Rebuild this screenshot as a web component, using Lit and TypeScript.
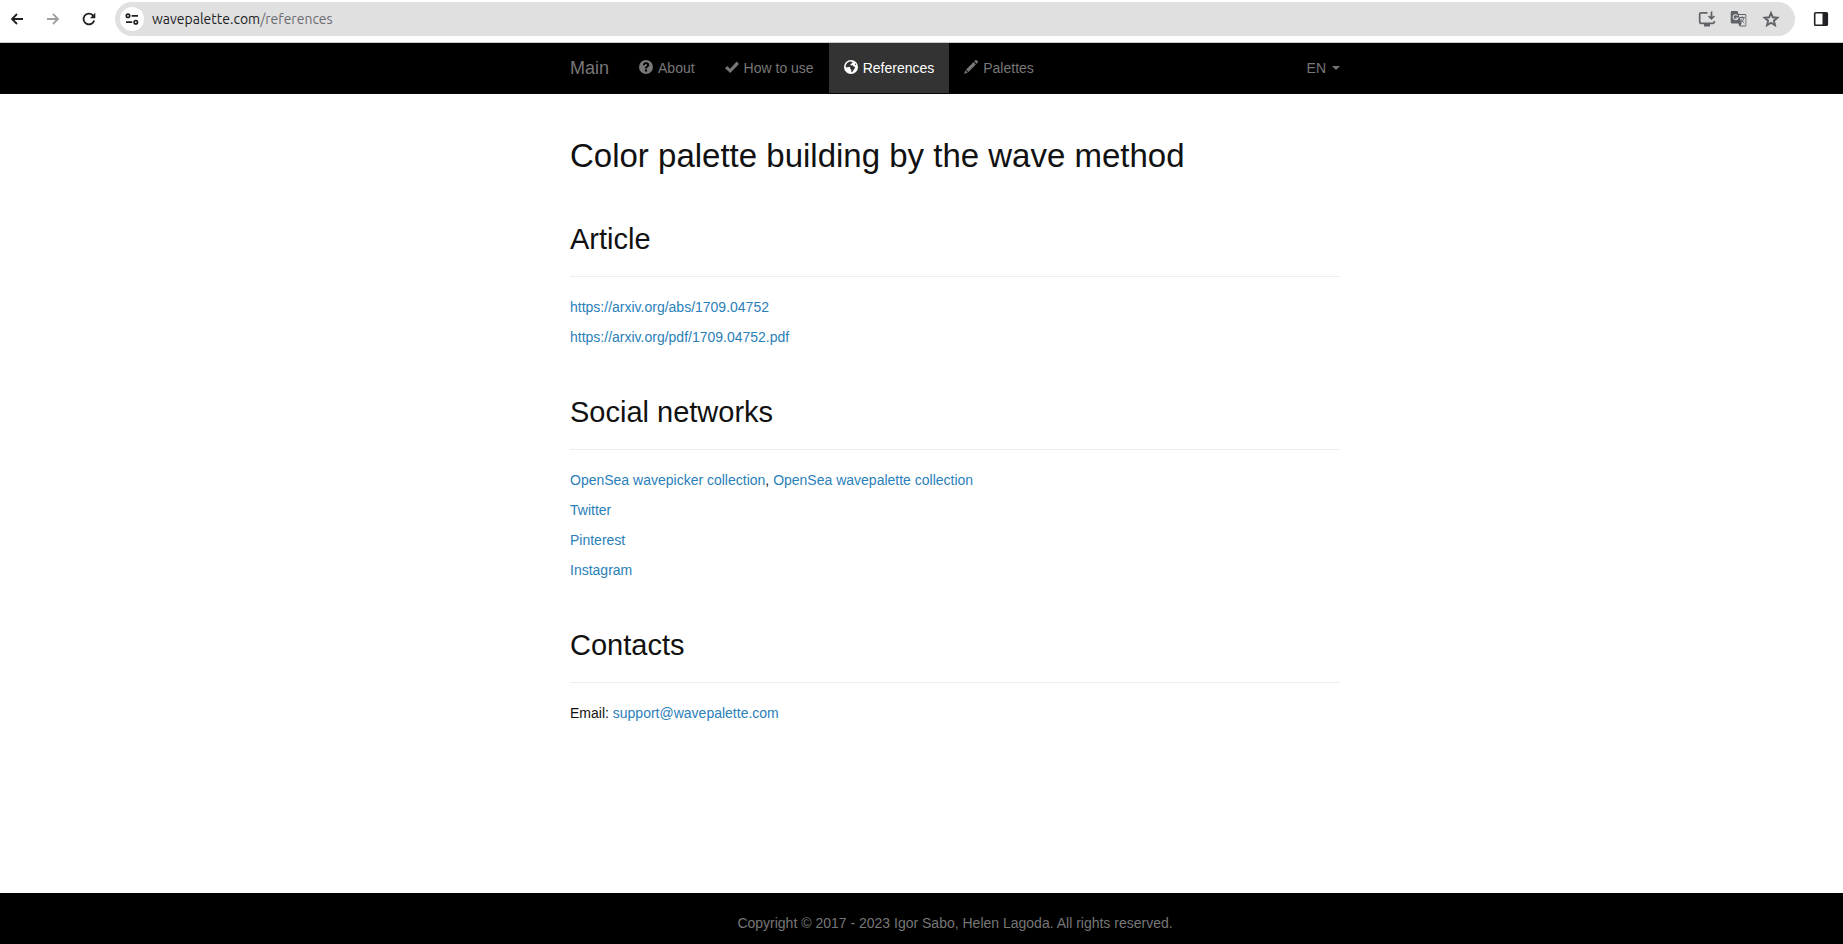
import { LitElement, html, css, svg } from "lit";
import { customElement } from "lit/decorators.js";

const glyph = (box: string, body: unknown, cls = "glyph") =>
  html`<svg class=${cls} viewBox=${box} aria-hidden="true">${body}</svg>`;

const icons = {
  back: svg`<path d="M14 8H3M8 3L3 8l5 5" fill="none" stroke="currentColor" stroke-width="1.8"/>`,
  forward: svg`<path d="M2 8h11M8 3l5 5-5 5" fill="none" stroke="currentColor" stroke-width="1.8"/>`,
  reload: svg`<path d="M13.2 9.4A5.4 5.4 0 1 1 11.9 4.3L13.4 6" fill="none" stroke="currentColor" stroke-width="1.8"/><path d="M14.3 1.8v5.4H9z" fill="currentColor"/>`,
  tune: svg`<g fill="none" stroke="currentColor" stroke-width="1.7"><circle cx="4" cy="4.8" r="1.7"/><path d="M7.6 4.8H14M2 11.2h6.2"/><circle cx="11.8" cy="11.2" r="1.7"/></g>`,
  install: svg`<path d="M9.5 2.8H3A1.3 1.3 0 0 0 1.7 4.1v8A1.3 1.3 0 0 0 3 13.4h12a1.3 1.3 0 0 0 1.3-1.3V11" fill="none" stroke="currentColor" stroke-width="1.7"/><path d="M6 14h6v2.5H6z" fill="currentColor"/><path d="M13.5 1.5v7M10.6 6l2.9 2.9L16.4 6" fill="none" stroke="currentColor" stroke-width="1.7"/>`,
  translate: svg`<path d="M2 1h5.500l1 3H15a1.300 1.300 0 0 1 1.300 1.300v10A1.300 1.300 0 0 1 15 16.600H9.500L8.300 13.500H2A1.300 1.300 0 0 1 .7 12.200v-10A1.300 1.300 0 0 1 2 1z" fill="currentColor"/><path d="M8.800 5H15a.5.5 0 0 1 .5.5v9.600a.5.500 0 0 1-.5.500h-4.600l1.200-2.200z" fill="#e0e0e0"/><path d="M7.700 5.800A2.500 2.500 0 1 0 8 8H5.500" fill="none" stroke="#e0e0e0" stroke-width="1.100"/><path d="M9.800 7.500h5M12.200 6.300v1.200M14 7.700c-.4 2-1.800 3.700-3.500 4.700M10.800 8.500c.6 1.700 1.800 3.200 3.500 4.500" fill="none" stroke="currentColor" stroke-width="1"/>`,
  star: svg`<path d="M9 3l1.800 4.300 4.600.4-3.500 3 1.100 4.500L9 12.800l-4 2.400 1.100-4.500-3.500-3 4.600-.4z" fill="none" stroke="currentColor" stroke-width="1.9"/>`,
  panel: svg`<rect x="1.7" y="1.7" width="12.6" height="12.6" rx=".8" fill="none" stroke="currentColor" stroke-width="1.6"/><path d="M9.5 2H14v12H9.5z" fill="currentColor"/>`,
  question: svg`<path fill-rule="evenodd" fill="currentColor" d="M7 0a7 7 0 1 1 0 14A7 7 0 0 1 7 0zM5.900 9.500v2h2.200v-2zM3.900 5.300h2c0-.8.300-1.200 1.100-1.200.7 0 1 .3 1 .9 0 .5-.2.800-.8 1.200-.9.600-1.300 1.100-1.300 2.300h2c0-.6.300-.9.900-1.300.9-.6 1.400-1.200 1.400-2.300 0-1.600-1.200-2.600-3.100-2.600-2 0-3.200 1.100-3.200 3z"/>`,
  check: svg`<path fill="currentColor" d="M0 8.300L2.200 6l2.900 2.700L11.700 1.600 14 3.900 5.200 13z"/>`,
  globe: svg`<path fill-rule="evenodd" fill="currentColor" d="M7 0a7 7 0 1 1 0 14A7 7 0 0 1 7 0zM7.200 1.400L8.600 2.500 7.600 3.600 6.300 4.200 6.900 5.400 8.700 5.200 9.800 6.400 11.200 6.900 10.400 8.700 9.200 10.500 8.100 12.600 7.300 11.700 7.300 9.800 6.100 8.700 6.200 7.300 4.900 6.800 4.100 7.600 2.900 6.600 3.400 8.200 2.300 7.200 1.500 6.200 2.300 4.200 3.600 2.600 5.200 1.700zM10.900 3l1.400 1.700-1.200.2z"/>`,
  pencil: svg`<path fill="currentColor" d="M11.300.3a1 1 0 0 1 1.400 0l1 1a1 1 0 0 1 0 1.400l-1.100 1.100-2.400-2.400zM9.500 2.100l2.400 2.400-7.400 7.400L2.100 9.500zM1.500 10.200l2.300 2.300L0 14z"/>`,
};

const menu = [
  { label: "About", icon: icons.question, active: false },
  { label: "How to use", icon: icons.check, active: false },
  { label: "References", icon: icons.globe, active: true },
  { label: "Palettes", icon: icons.pencil, active: false },
];

@customElement("browser-bar")
class BrowserBar extends LitElement {
  static styles = css`
    :host { display: flex; align-items: center; height: 42px; padding: 0 14px 0 9px; box-sizing: border-box; background: #fff; color: #202124; }
    .tool { display: flex; padding: 0; border: 0; background: none; color: inherit; margin: 0 0 4px; }
    .nav { display: flex; gap: 20px; }
    .dim { color: #a0a0a0; }
    .glyph { display: block; width: 16px; height: 16px; }
    .big { display: block; width: 18px; height: 18px; }
    .address { display: flex; flex: 1; align-items: center; height: 34px; margin: 0 18px 4px; padding: 0 15px 0 5px; border-radius: 17px; background: #e0e0e0; box-sizing: border-box; }
    .address .tool { margin: 0; color: #5f6368; }
    .address .site { width: 24px; height: 24px; align-items: center; justify-content: center; border-radius: 12px; background: #fff; color: #202124; }
    .url { flex: 1; margin-left: 8px; font: 14px/20px Ubuntu, "Noto Sans", sans-serif; color: #6b6d70; }
    .host { color: #202124; }
    .actions { display: flex; gap: 14px; }
  `;
  render() {
    return html`
      <div class="nav">
        <button class="tool" aria-label="Back">${glyph("0 0 16 16", icons.back)}</button>
        <button class="tool dim" aria-label="Forward">${glyph("0 0 16 16", icons.forward)}</button>
        <button class="tool" aria-label="Reload">${glyph("0 0 16 16", icons.reload)}</button>
      </div>
      <div class="address">
        <button class="tool site" aria-label="Site information">${glyph("0 0 16 16", icons.tune)}</button>
        <div class="url"><span class="host">wavepalette.com</span>/references</div>
        <div class="actions">
          <button class="tool" aria-label="Install">${glyph("0 0 18 18", icons.install, "big")}</button>
          <button class="tool" aria-label="Translate">${glyph("0 0 18 18", icons.translate, "big")}</button>
          <button class="tool" aria-label="Bookmark">${glyph("0 0 18 18", icons.star, "big")}</button>
        </div>
      </div>
      <button class="tool" aria-label="Side panel">${glyph("0 0 16 16", icons.panel)}</button>
    `;
  }
}

@customElement("app-root")
class AppRoot extends LitElement {
  static styles = css`
    :host { display: flex; flex-direction: column; min-height: 100vh; background: #fff; color: #111; font: 14px/20px "Liberation Sans", Arial, sans-serif; }
    a { color: #2a80b9; text-decoration: none; }
    .bar, main, footer { padding-left: 67px; }
    .container { max-width: 770px; margin: 0 auto; }
    .bar { background: #000; border-top: 1px solid #c8ccc8; border-bottom: 1px solid #080808; }
    .bar .container { display: flex; height: 50px; align-items: stretch; }
    .bar a, .lang { display: flex; align-items: center; color: #777; }
    .bar .brand { padding-right: 15px; font-size: 18px; }
    .bar .item { gap: 5px; padding: 0 15px; }
    .bar .active { background: #333; color: #fff; }
    .glyph { display: block; width: 14px; height: 14px; margin-bottom: 2px; }
    .lang { gap: 6px; margin-left: auto; padding: 0; border: 0; background: none; font: inherit; }
    .caret { border: 4px solid transparent; border-top-color: currentColor; border-bottom: 0; }
    main { flex: 1; padding-top: 44px; }
    h1, h2 { margin: 0; font-weight: 400; }
    h1 { font-size: 33px; line-height: 36px; }
    section { margin-top: 49px; }
    h2 { font-size: 29px; line-height: 32px; padding-bottom: 21px; border-bottom: 1px solid #eee; margin-bottom: 20px; }
    p { margin: 0 0 10px; }
    section p:last-child { margin-bottom: 0; }
    footer { padding-top: 20px; padding-bottom: 11px; background: #000; color: #777; text-align: center; }
  `;
  render() {
    return html`
      <browser-bar></browser-bar>
      <nav class="bar">
        <div class="container">
          <a class="brand" href="#">Main</a>
          ${menu.map((m) => html`<a class=${m.active ? "item active" : "item"} href="#">${glyph("0 0 14 14", m.icon)}<span>${m.label}</span></a>`)}
          <button class="lang">EN<span class="caret"></span></button>
        </div>
      </nav>
      <main>
        <div class="container">
          <h1>Color palette building by the wave method</h1>
          <section>
            <h2>Article</h2>
            <p><a href="#">https://arxiv.org/abs/1709.04752</a></p>
            <p><a href="#">https://arxiv.org/pdf/1709.04752.pdf</a></p>
          </section>
          <section>
            <h2>Social networks</h2>
            <p><a href="#">OpenSea wavepicker collection</a>, <a href="#">OpenSea wavepalette collection</a></p>
            <p><a href="#">Twitter</a></p>
            <p><a href="#">Pinterest</a></p>
            <p><a href="#">Instagram</a></p>
          </section>
          <section>
            <h2>Contacts</h2>
            <p>Email: <a href="#">support@wavepalette.com</a></p>
          </section>
        </div>
      </main>
      <footer><div class="container">Copyright © 2017 - 2023 Igor Sabo, Helen Lagoda. All rights reserved.</div></footer>
    `;
  }
}
